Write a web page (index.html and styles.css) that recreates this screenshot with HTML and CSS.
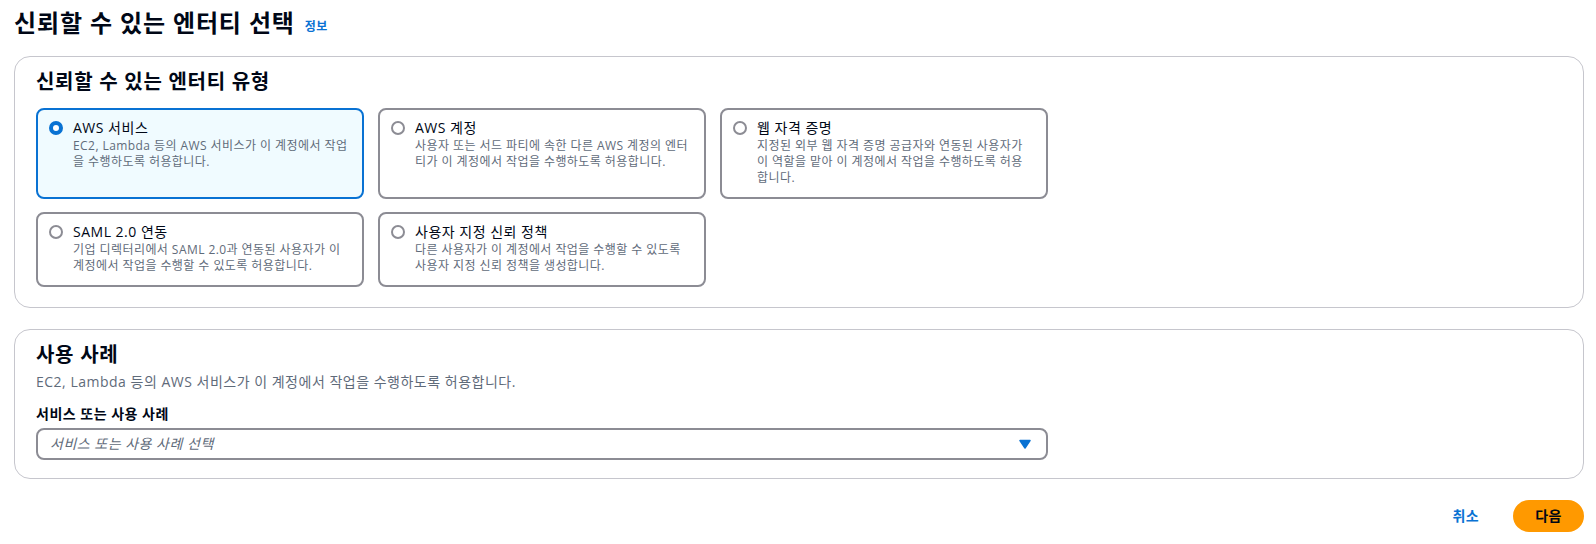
FILE: index.html
```html
<!DOCTYPE html>
<html lang="ko">
<head>
<meta charset="utf-8">
<title>신뢰할 수 있는 엔터티 선택</title>
<link rel="stylesheet" href="styles.css">
</head>
<body>
<div class="page">
  <h1 class="page-title">신뢰할 수 있는 엔터티 선택<a class="info" href="#">정보</a></h1>

  <section class="container">
    <h2 class="container-title">신뢰할 수 있는 엔터티 유형</h2>
    <div class="tiles">
      <label class="tile selected">
        <span class="radio checked"></span>
        <span class="tile-body">
          <span class="tile-title">AWS 서비스</span>
          <span class="tile-desc">EC2, Lambda 등의 AWS 서비스가 이 계정에서 작업을 수행하도록 허용합니다.</span>
        </span>
      </label>
      <label class="tile">
        <span class="radio"></span>
        <span class="tile-body">
          <span class="tile-title">AWS 계정</span>
          <span class="tile-desc">사용자 또는 서드 파티에 속한 다른 AWS 계정의 엔터티가 이 계정에서 작업을 수행하도록 허용합니다.</span>
        </span>
      </label>
      <label class="tile">
        <span class="radio"></span>
        <span class="tile-body">
          <span class="tile-title">웹 자격 증명</span>
          <span class="tile-desc">지정된 외부 웹 자격 증명 공급자와 연동된 사용자가 이 역할을 맡아 이 계정에서 작업을 수행하도록 허용합니다.</span>
        </span>
      </label>
      <label class="tile">
        <span class="radio"></span>
        <span class="tile-body">
          <span class="tile-title">SAML 2.0 연동</span>
          <span class="tile-desc">기업 디렉터리에서 SAML 2.0과 연동된 사용자가 이 계정에서 작업을 수행할 수 있도록 허용합니다.</span>
        </span>
      </label>
      <label class="tile">
        <span class="radio"></span>
        <span class="tile-body">
          <span class="tile-title">사용자 지정 신뢰 정책</span>
          <span class="tile-desc">다른 사용자가 이 계정에서 작업을 수행할 수 있도록 사용자 지정 신뢰 정책을 생성합니다.</span>
        </span>
      </label>
    </div>
  </section>

  <section class="container">
    <h2 class="container-title">사용 사례</h2>
    <p class="container-desc">EC2, Lambda 등의 AWS 서비스가 이 계정에서 작업을 수행하도록 허용합니다.</p>
    <div class="field-label">서비스 또는 사용 사례</div>
    <div class="select">
      <span class="placeholder">서비스 또는 사용 사례 선택</span>
      <svg class="caret" width="12" height="10" viewBox="0 0 12 10"><path d="M1 1.5 H11 L6 9 Z" fill="#0972d3" stroke="#0972d3" stroke-width="1.5" stroke-linejoin="round"/></svg>
    </div>
  </section>

  <div class="actions">
    <button class="btn btn-link">취소</button>
    <button class="btn btn-primary">다음</button>
  </div>
</div>
</body>
</html>
```

FILE: styles.css
```css
*, *::before, *::after {
  box-sizing: border-box;
  letter-spacing: 0.036em;
}

html, body {
  margin: 0;
  padding: 0;
  background: #ffffff;
}

body {
  font-family: "Open Sans", "Noto Sans CJK KR", sans-serif;
  color: #000716;
  font-size: 14px;
  line-height: 20px;
}

.page {
  padding: 8px 12px 0 14px;
}

.page-title {
  margin: 0;
  height: 30px;
  font-size: 24px;
  line-height: 30px;
  font-weight: 700;
  color: #000716;
}

.info {
  margin-left: 10px;
  font-size: 12px;
  line-height: 1;
  font-weight: 700;
  color: #0972d3;
  text-decoration: none;
  vertical-align: 1px;
}

.container {
  margin-top: 18px;
  border: 1px solid #c6c6cd;
  border-radius: 16px;
  padding: 13px 20px 20px 21px;
  background: #ffffff;
}

.container + .container {
  margin-top: 21px;
  padding-bottom: 18px;
}

.container-title {
  margin: 0;
  font-size: 20px;
  line-height: 24px;
  font-weight: 700;
}

.tiles {
  margin-top: 14px;
  display: grid;
  grid-template-columns: repeat(3, 328px);
  column-gap: 14px;
  row-gap: 13px;
}

.tile {
  display: flex;
  align-items: flex-start;
  border: 2px solid #8c8c94;
  border-radius: 8px;
  padding: 8px 12px 11px 11px;
  background: #ffffff;
  cursor: pointer;
}

.tile.selected {
  border-color: #0972d3;
  background: #f0fbff;
}

.radio {
  flex: none;
  width: 14px;
  height: 14px;
  margin-top: 3px;
  margin-right: 10px;
  border-radius: 50%;
  border: 2px solid #8c8c94;
  background: #ffffff;
}

.radio.checked {
  border: 4px solid #0972d3;
}

.tile-body {
  display: flex;
  flex-direction: column;
  min-width: 0;
}

.tile-title {
  font-size: 14px;
  line-height: 20px;
  color: #000716;
}

.tile-desc {
  font-size: 12px;
  line-height: 16px;
  color: #5f6b7a;
}

.container-desc {
  margin: 5px 0 0;
  font-size: 14px;
  line-height: 20px;
  color: #5f6b7a;
}

.field-label {
  margin-top: 12px;
  font-size: 14px;
  line-height: 20px;
  font-weight: 700;
}

.select {
  margin-top: 4px;
  width: 1012px;
  height: 32px;
  border: 2px solid #8c8c94;
  border-radius: 8px;
  padding: 0 15px 0 12px;
  display: flex;
  align-items: center;
  justify-content: space-between;
}

.placeholder {
  font-style: italic;
  color: #5f6b7a;
}

.caret {
  display: block;
}

.actions {
  margin-top: 21px;
  display: flex;
  justify-content: flex-end;
  gap: 12px;
}

.btn {
  font-family: inherit;
  font-size: 14px;
  line-height: 20px;
  font-weight: 700;
  border: 2px solid transparent;
  border-radius: 20px;
  padding: 4px 20px;
  cursor: pointer;
}

.btn-link {
  background: transparent;
  color: #0972d3;
}

.btn-primary {
  background: #ff9900;
  border-color: #ff9900;
  color: #000716;
}
```
